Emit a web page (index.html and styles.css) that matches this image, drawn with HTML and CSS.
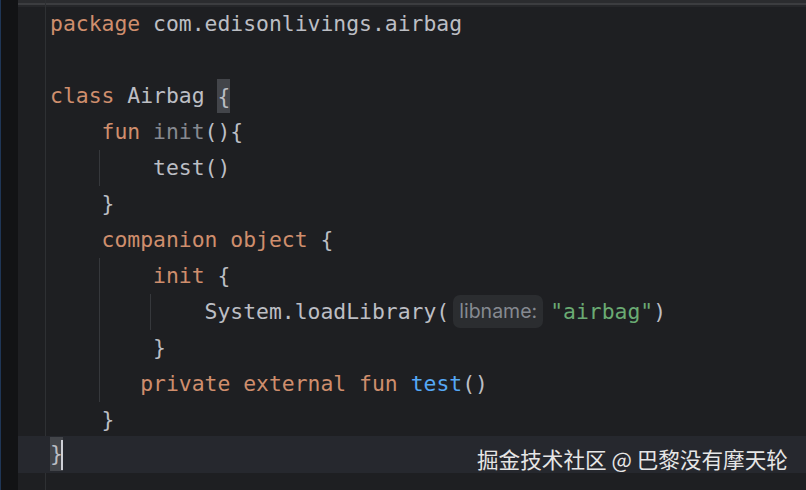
FILE: index.html
```html
<!DOCTYPE html>
<html>
<head>
<meta charset="utf-8">
<link rel="stylesheet" href="styles.css">
</head>
<body>
<div class="topbar"></div>
<div class="main">
  <div class="strip"></div>
  <div class="gutter"></div>
  <div class="code">
    <div class="line"><span class="kw">package</span> com.edisonlivings.airbag</div>
    <div class="line"> </div>
    <div class="line"><span class="kw">class</span> Airbag <span class="match">{</span></div>
    <div class="line">    <span class="kw">fun</span> <span class="unused">init</span>(){</div>
    <div class="line"><span class="guide g1"></span>        test()</div>
    <div class="line">    }</div>
    <div class="line">    <span class="kw">companion object</span> {</div>
    <div class="line"><span class="guide g1"></span>        <span class="kw">init</span> {</div>
    <div class="line"><span class="guide g1"></span><span class="guide g2"></span>            System.loadLibrary(<span class="hint">libname:</span><span class="str">"airbag"</span>)</div>
    <div class="line"><span class="guide g1"></span>        }</div>
    <div class="line"><span class="guide g1"></span>       <span class="kw">private external fun</span> <span class="fn">test</span>()</div>
    <div class="line">    }</div>
    <div class="line current"><span class="match">}</span><span class="caret"></span></div>
  </div>
</div>
<div class="watermark">掘金技术社区 @ 巴黎没有摩天轮</div>
</body>
</html>
```
FILE: styles.css
```css
html, body {
  margin: 0;
  padding: 0;
  background: #1e1f22;
  width: 806px;
  height: 490px;
  overflow: hidden;
}
body {
  position: relative;
}
.topbar {
  height: 3px;
  background: #2b2c2f;
  border-bottom: 2px solid #3c3d40;
  margin-left: 18px;
  box-shadow: 0 2px 0 #26272a;
}
.main {
  display: flex;
  height: 485px;
}
.strip {
  width: 17px;
  background: #121315;
  border-left: 1px solid #1f3656;
  margin-top: -5px;
}
.gutter {
  width: 27px;
  border-right: 1px solid #2e3033;
  margin-top: -5px;
}
.code {
  flex: 1;
  padding-top: 1px;
  padding-left: 4px;
  font-family: "DejaVu Sans Mono", monospace;
  font-size: 21.4px;
  color: #bcbec4;
}
.line {
  position: relative;
  height: 36px;
  line-height: 36px;
  white-space: pre;
}
.current {
  background: #26282e;
  margin-left: -32px;
  padding-left: 32px;
  margin-top: -2px;
  height: 37px;
}
.kw { color: #cf8e6d; }
.unused { color: #868990; }
.fn { color: #56a8f5; }
.str { color: #6aab73; }
.match {
  background: #43454a;
  display: inline-block;
  height: 34px;
  line-height: 36px;
  vertical-align: top;
  margin-top: 1px;
}
.current .match {
  margin-top: 1px;
  line-height: 34px;
}
.caret {
  display: inline-block;
  width: 2px;
  height: 30px;
  background: #ced0d6;
  vertical-align: top;
  margin-top: 4px;
  margin-left: -2px;
}
.guide {
  position: absolute;
  top: 0;
  width: 1px;
  height: 36px;
  background: #36383c;
}
.g1 { left: 49px; }
.g2 { left: 100px; }
.hint {
  display: inline-block;
  font-family: "Inter", "Noto Sans", sans-serif;
  font-size: 19.5px;
  color: #868a91;
  background: #2b2d30;
  border-radius: 7px;
  padding: 0 6px;
  line-height: 33px;
  height: 33px;
  vertical-align: top;
  margin-top: 1px;
  margin-left: 4px;
  margin-right: 7px;
}
.watermark {
  position: absolute;
  left: 477px;
  top: 445px;
  font-family: "Noto Sans CJK SC", sans-serif;
  font-size: 21.6px;
  line-height: 28px;
  color: #e6e6e6;
  white-space: nowrap;
}
```
